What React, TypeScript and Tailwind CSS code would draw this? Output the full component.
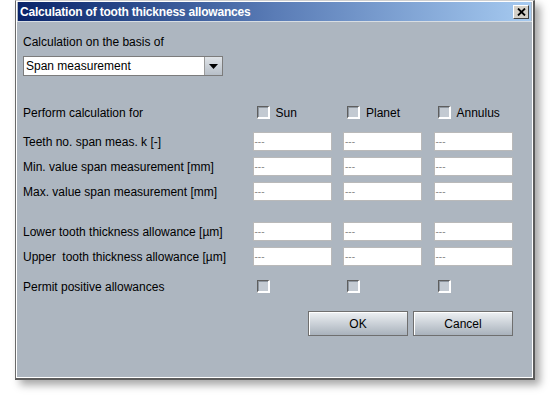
import React from 'react'

const font = "font-['Liberation_Sans',Arial,sans-serif]"

function Field() {
  return (
    <div className="w-[79px] h-[19px] bg-white border border-[#b9b9b9] flex items-center pl-[1px] text-[10px] text-[#8a8a8a] leading-none">
      ---
    </div>
  )
}

function Check({ label }: { label?: string }) {
  return (
    <div className="flex items-center gap-[6px] ml-[4px]">
      <div className="w-[13px] h-[13px] border-t border-l border-[#5e5e5e] border-b-2 border-r-2 border-b-white border-r-white bg-[#c3cad2] shadow-[inset_1px_1px_0_#8e969f]" />
      {label && <span className="text-[12px] text-black">{label}</span>}
    </div>
  )
}

function Row({ label, children, className = '' }: { label: string; children: React.ReactNode; className?: string }) {
  return (
    <div className={`grid grid-cols-[218px_79px_79px_79px] gap-x-[11.5px] items-center h-[19px] ${className}`}>
      <span className="text-[12px] text-black whitespace-pre leading-none">{label}</span>
      {children}
    </div>
  )
}

function Btn({ label }: { label: string }) {
  return (
    <button className="w-[100px] h-[25px] border border-[#6f6f6f] bg-gradient-to-b from-[#eef1f4] to-[#a9b2bc] shadow-[inset_1px_1px_0_#ffffff] text-[12px] text-black">
      {label}
    </button>
  )
}

export default function App() {
  return (
    <div className={`w-[550px] h-[395px] bg-white ${font}`}>
      <div className="ml-[15px] w-[520px] h-[380px] border-l border-t border-[#d0d0d0] border-l-[#6a6a6a] border-r-2 border-b-2 border-r-[#5c5c5c] border-b-[#5c5c5c] bg-[#adb6c0] shadow-[5px_5px_8px_rgba(0,0,0,0.35)]">
        <div className="h-full border border-white flex flex-col">
          {/* title bar */}
          <div className="h-[19px] mx-[1px] bg-gradient-to-r from-[#0a246a] via-[#5a7cb6] to-[#a6caf0] flex items-center justify-between pl-[2px] pr-[2px]">
            <span className="text-white font-bold text-[12px] tracking-[-0.2px] leading-none">Calculation of tooth thickness allowances</span>
            <div className="w-[16px] h-[14px] bg-[#d4d0c8] border-t border-l border-white border-b border-r border-b-[#404040] border-r-[#404040] flex items-center justify-center">
              <svg width="9" height="8" viewBox="0 0 9 8">
                <path d="M1 0.5 L8 7.5 M8 0.5 L1 7.5" stroke="#000" strokeWidth="1.8" />
              </svg>
            </div>
          </div>
          <div className="h-px bg-[#d7dde3]" />

          <div className="pl-[6px] flex flex-col">
            <div className="mt-[13px] text-[12px] leading-[14px] text-black">Calculation on the basis of</div>

            <div className="mt-[7px] w-[200px] h-[20px] border border-[#7c7c7c] bg-white flex">
              <div className="flex-1 flex items-center pl-[2px] text-[12px] text-black">Span measurement</div>
              <div className="w-[18px] border-l border-[#9a9a9a] bg-gradient-to-b from-[#dfe3e7] to-[#b7bfc8] flex items-center justify-center">
                <svg width="9" height="5" viewBox="0 0 9 5">
                  <path d="M0 0 L9 0 L4.5 5 Z" fill="#000" />
                </svg>
              </div>
            </div>

            <Row label="Perform calculation for" className="mt-[27px]">
              <Check label="Sun" />
              <Check label="Planet" />
              <Check label="Annulus" />
            </Row>

            <Row label="Teeth no. span meas. k [-]" className="mt-[10px]">
              <Field /><Field /><Field />
            </Row>
            <Row label="Min. value span measurement [mm]" className="mt-[6px]">
              <Field /><Field /><Field />
            </Row>
            <Row label="Max. value span measurement [mm]" className="mt-[6px]">
              <Field /><Field /><Field />
            </Row>

            <Row label="Lower tooth thickness allowance [µm]" className="mt-[21px]">
              <Field /><Field /><Field />
            </Row>
            <Row label="Upper  tooth thickness allowance [µm]" className="mt-[6px]">
              <Field /><Field /><Field />
            </Row>

            <Row label="Permit positive allowances" className="mt-[11px]">
              <Check />
              <Check />
              <Check />
            </Row>

            <div className="mt-[15px] flex justify-end gap-[5px] pr-[19px]">
              <Btn label="OK" />
              <Btn label="Cancel" />
            </div>
          </div>
        </div>
      </div>
    </div>
  )
}
